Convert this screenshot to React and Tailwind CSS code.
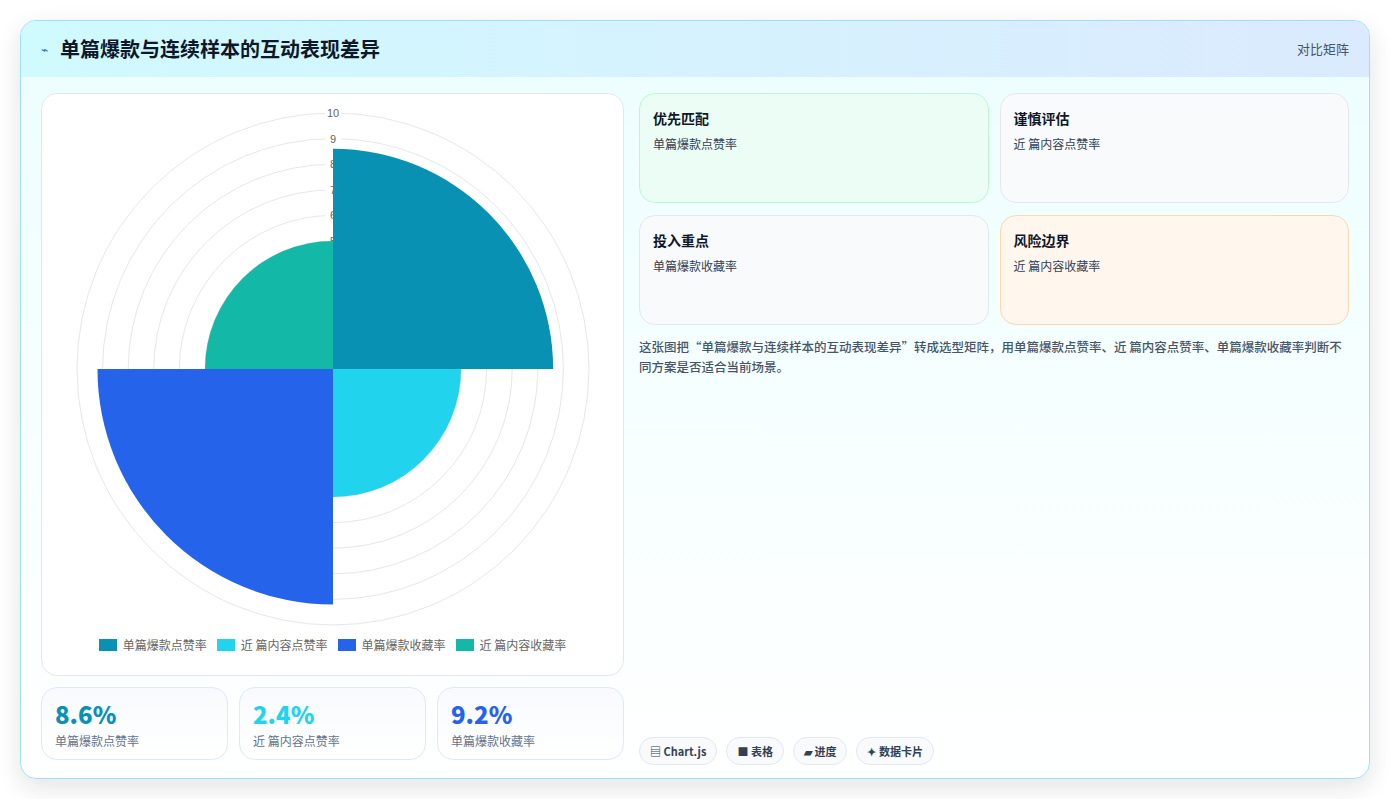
export default function App() {
  const cx = 291, cy = 275, u = 25.6;
  const seg = (r, a0, a1) => {
    const p = (a) => [cx + r * Math.cos(a), cy + r * Math.sin(a)];
    const [x0, y0] = p(a0), [x1, y1] = p(a1);
    return `M${cx} ${cy} L${x0} ${y0} A${r} ${r} 0 0 1 ${x1} ${y1} Z`;
  };
  const H = Math.PI / 2;
  const f = { fontFamily: '"Noto Sans CJK SC","Noto Sans",sans-serif' };
  const legend = [["#0891b2", "单篇爆款点赞率"], ["#22d3ee", "近 篇内容点赞率"], ["#2563eb", "单篇爆款收藏率"], ["#14b8a6", "近 篇内容收藏率"]];
  const cards = [
    ["优先匹配", "单篇爆款点赞率", "bg-[#ecfdf5] border-[#bbf7d0]"],
    ["谨慎评估", "近 篇内容点赞率", "bg-[#f8fafc] border-[#e2e8f0]"],
    ["投入重点", "单篇爆款收藏率", "bg-[#f8fafc] border-[#e2e8f0]"],
    ["风险边界", "近 篇内容收藏率", "bg-[#fff7ed] border-[#fed7aa]"],
  ];
  return (
    <div className="w-[1390px] h-[799px] bg-white p-5" style={f}>
      <div className="h-[759px] w-[1350px] rounded-2xl border border-[#9be3f0] overflow-hidden shadow-[0_8px_24px_rgba(15,23,42,0.12)] flex flex-col bg-gradient-to-b from-[#ecfeff] to-white">
        <div className="h-[56px] shrink-0 flex items-center justify-between px-5 bg-gradient-to-r from-[#cffafe] to-[#dbeafe]">
          <div className="flex items-center gap-3">
            <span className="text-[#2563eb] text-xs">⌁</span>
            <span className="text-[20px] font-bold text-[#0f172a]">单篇爆款与连续样本的互动表现差异</span>
          </div>
          <span className="text-[13px] text-[#475569]">对比矩阵</span>
        </div>
        <div className="flex gap-[15px] px-5 pt-[16px]">
          <div className="w-[583px] flex flex-col gap-[11px]">
            <div className="h-[583px] rounded-2xl border border-[#e2e8f0] bg-white flex flex-col items-center">
              <svg width="582" height="540" className="shrink-0">
                {[1,2,3,4,5,6,7,8,9,10].map(k => <circle key={k} cx={cx} cy={cy} r={k*u} fill="none" stroke="#e5e7eb" strokeWidth="1" />)}
                {[5,6,7,8,9,10].map(k => (
                  <g key={k}>
                    <rect x={cx-8} y={cy-k*u-7} width="16" height="13" fill="white" />
                    <text x={cx} y={cy-k*u+4} textAnchor="middle" fontSize="11" fill="#666" fontFamily="Liberation Sans, sans-serif">{k}</text>
                  </g>
                ))}
                <path d={seg(8.6*u, -H, 0)} fill="#0891b2" />
                <path d={seg(5*u, 0, H)} fill="#22d3ee" />
                <path d={seg(9.2*u, H, 2*H)} fill="#2563eb" />
                <path d={seg(5*u, 2*H, 3*H)} fill="#14b8a6" />
              </svg>
              <div className="flex gap-[10px] mt-[2px] text-[12px] text-[#666]">
                {legend.map(([c, t]) => (
                  <div key={t} className="flex items-center gap-[6px]">
                    <span className="w-[18px] h-[12px]" style={{ background: c }} />
                    <span>{t}</span>
                  </div>
                ))}
              </div>
            </div>
            <div className="grid grid-cols-3 gap-[11px]">
              {[["8.6%", "#0891b2", "单篇爆款点赞率"], ["2.4%", "#22d3ee", "近 篇内容点赞率"], ["9.2%", "#2563eb", "单篇爆款收藏率"]].map(([v, c, t]) => (
                <div key={t} className="h-[73px] rounded-2xl border border-[#dbeafe] bg-gradient-to-b from-[#f8fafc] to-white px-[13px] pt-[10px]">
                  <div className="text-[24px] font-extrabold leading-[32px]" style={{ color: c }}>{v}</div>
                  <div className="text-[12px] text-[#64748b] mt-[2px]">{t}</div>
                </div>
              ))}
            </div>
          </div>
          <div className="flex-1 flex flex-col">
            <div className="grid grid-cols-2 gap-x-[11px] gap-y-[12px]">
              {cards.map(([a, b, cls]) => (
                <div key={a} className={`h-[110px] rounded-2xl border px-[13px] pt-[14px] ${cls}`}>
                  <div className="text-[14px] font-bold text-[#0f172a]">{a}</div>
                  <div className="text-[12px] text-[#334155] mt-[6px]">{b}</div>
                </div>
              ))}
            </div>
            <p className="mt-[12px] text-[12.5px] leading-[20px] text-[#475569] font-medium">这张图把“单篇爆款与连续样本的互动表现差异”转成选型矩阵，用单篇爆款点赞率、近 篇内容点赞率、单篇爆款收藏率判断不同方案是否适合当前场景。</p>
            <div className="flex-1" />
            <div className="flex gap-[9px] mb-[1px] mt-[360px]">
              {["▤ Chart.js", "■ 表格", "▰ 进度", "✦ 数据卡片"].map(t => (
                <span key={t} className="h-[28px] px-[10px] rounded-full border border-[#e2e8f0] bg-[#f8fafc] text-[11px] font-bold text-[#334155] flex items-center">{t}</span>
              ))}
            </div>
          </div>
        </div>
      </div>
    </div>
  );
}
